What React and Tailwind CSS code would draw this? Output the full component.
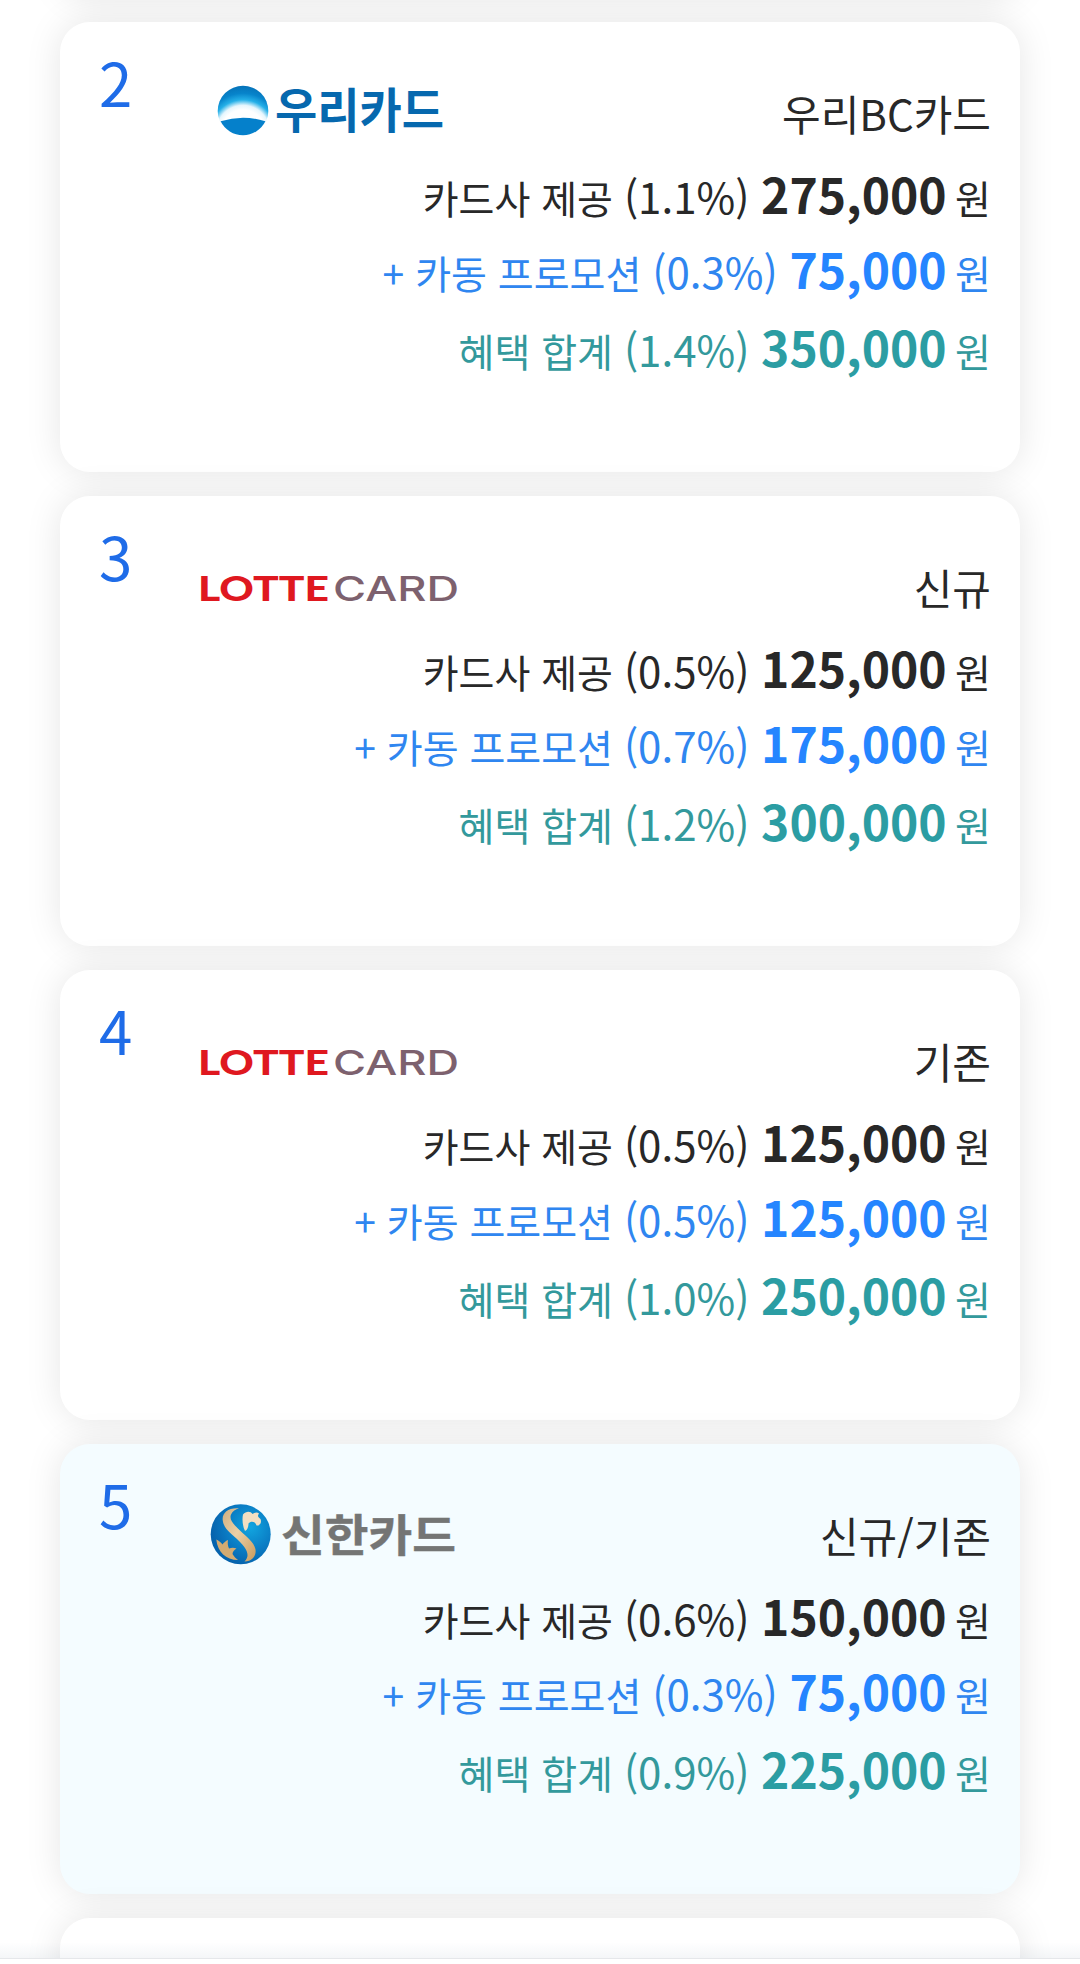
function WooriLogo() {
  return (
    <svg width="300" height="110" viewBox="0 0 300 110" role="img" aria-label="우리카드">
      <defs>
        <radialGradient id="wooriSky" gradientUnits="userSpaceOnUse" cx="63" cy="74" r="46">
          <stop offset="0.48" stopColor="#ffffff" />
          <stop offset="0.58" stopColor="#e6f6fd" />
          <stop offset="0.7" stopColor="#25b0e8" />
          <stop offset="0.84" stopColor="#0784cb" />
          <stop offset="1" stopColor="#0673b9" />
        </radialGradient>
      </defs>
      <circle cx="63" cy="53" r="25.3" fill="url(#wooriSky)" />
      <path d="M40.6 63.3 Q63 56 85.4 63.3 A25 25 0 0 1 40.6 63.3 Z" fill="#0580cb" />
      <text x="95" y="69.8" textLength="169" lengthAdjust="spacingAndGlyphs" fontSize="47.5" fontWeight="700" fill="#0668ae">우리카드</text>
    </svg>
  );
}

function LotteLogo() {
  return (
    <svg width="300" height="110" viewBox="0 0 300 110" role="img" aria-label="LOTTE CARD">
      <text x="18" y="69.3" textLength="131" lengthAdjust="spacingAndGlyphs" fontSize="34" fontWeight="900" fill="#df181f" className="font-['Lato',sans-serif]">LOTTE</text>
      <text x="153" y="69.3" textLength="126" lengthAdjust="spacingAndGlyphs" fontSize="33.5" fontWeight="500" fill="#7d616e" className="font-['Inter',sans-serif]">CARD</text>
    </svg>
  );
}

function ShinhanLogo() {
  return (
    <svg width="300" height="110" viewBox="0 0 300 110" role="img" aria-label="신한카드">
      <defs>
        <radialGradient id="shinhanBall" cx="0.66" cy="0.38" r="0.65">
          <stop offset="0" stopColor="#12a6e0" />
          <stop offset="0.6" stopColor="#0a7cc4" />
          <stop offset="1" stopColor="#0663ad" />
        </radialGradient>
        <linearGradient id="shinhanGold" x1="0" y1="0" x2="1" y2="1">
          <stop offset="0" stopColor="#cfae80" />
          <stop offset="0.45" stopColor="#ecd0a6" />
          <stop offset="1" stopColor="#c89a5c" />
        </linearGradient>
      </defs>
      <circle cx="60.7" cy="54.3" r="30" fill="url(#shinhanBall)" />
      <path d="M59 28.3 C48 27.5 42 33 42.7 40 C43.5 49 52 54 59 61 C66 68 71 75 64.5 81.5 C72 81.5 76.5 76 75.5 69.5 C74 62 67 57 60 50.5 C53 44 49 39.5 51 34.5 C52.5 31 55.5 29.5 59 28.3 Z" fill="url(#shinhanGold)" />
      <path d="M63 34.5 C66 31 70.5 31 72.5 34 C75 32 77.5 32 79 33.5 C77.5 35.5 77.5 37 80.5 39 C82 42.5 80 46 76.5 45.5 C75.5 41.5 71 40.5 68.5 43.5 C68.5 47 67.5 50 65 51 C62.5 46 62 39 63 34.5 Z" fill="#f2dfc2" />
      <path d="M36.3 59.5 C39 60.5 41 62.5 42.5 64.5 C44 62.5 45.5 61 48 60 C47.5 63 47.8 66 49 68.5 C51.5 67.5 54 67.5 56.5 68.5 C54 70 52.8 71.5 52.5 74 C54 76.5 56 78.5 58 80 C46 80 37.5 72 36.3 59.5 Z" fill="#d4ab72" />
      <text x="101" y="71.8" textLength="175" lengthAdjust="spacingAndGlyphs" fontSize="44.5" fontWeight="700" fill="#747574" stroke="#747574" strokeWidth="0.4">신한카드</text>
    </svg>
  );
}

const cards = [
  { rank: "2", Logo: WooriLogo, title: "우리BC카드", base: ["1.1%", "275,000"], promo: ["0.3%", "75,000"], total: ["1.4%", "350,000"] },
  { rank: "3", Logo: LotteLogo, title: "신규", base: ["0.5%", "125,000"], promo: ["0.7%", "175,000"], total: ["1.2%", "300,000"] },
  { rank: "4", Logo: LotteLogo, title: "기존", base: ["0.5%", "125,000"], promo: ["0.5%", "125,000"], total: ["1.0%", "250,000"] },
  { rank: "5", Logo: ShinhanLogo, title: "신규/기존", base: ["0.6%", "150,000"], promo: ["0.3%", "75,000"], total: ["0.9%", "225,000"], tinted: true },
];

function Row({ label, value, className, amountClass = "" }) {
  return (
    <div className={`flex items-baseline justify-end whitespace-pre text-[39px] ${className}`}>
      <span>{`${label} `}</span>
      <span className="text-[42px]">{`(${value[0]}) `}</span>
      <strong className={`text-[48px] font-bold ${amountClass}`}>{value[1]}</strong>
      <span className="-ml-[2.5px]"> 원</span>
    </div>
  );
}

const shell = "w-[960px] shrink-0 rounded-[30px] shadow-[0_0_36px_rgba(0,0,0,0.1)]";

function BenefitCard({ rank, Logo, title, base, promo, total, tinted }) {
  return (
    <section className={`${shell} h-[450px] ${tinted ? "bg-[#f4fcff]" : "bg-white"}`}>
      <header className="flex h-[146px] items-start pr-[29px]">
        <span className="w-[120px] pt-[13px] pl-[39px] text-[60px] leading-[92px] text-[#1f6ce8]">{rank}</span>
        <div className="mt-9">
          <Logo />
        </div>
        <h2 className="ml-auto pt-[61px] text-[42px] leading-[60px] text-[#282828]">{title}</h2>
      </header>
      <div className="pr-[29px]">
        <Row label="카드사 제공" value={base} className="h-[75px] leading-[50px] text-[#282828]" />
        <Row label="+ 카동 프로모션" value={promo} className="h-[78px] leading-[50px] text-[#2f86f0]" amountClass="text-[#2585ff]" />
        <Row label="혜택 합계" value={total} className="h-[75px] leading-[50px] text-[#33999c]" amountClass="text-[#2b9da3]" />
      </div>
    </section>
  );
}

export default function App() {
  return (
    <main className="flex h-[1964px] w-[1080px] flex-col overflow-hidden bg-white font-['Noto_Sans_CJK_KR',sans-serif]" lang="ko">
      <div className="flex h-[1958px] shrink-0 flex-col items-center gap-6 overflow-hidden">
        <section className={`${shell} -mt-[452px] h-[450px] bg-white`} />
        {cards.map((card) => (
          <BenefitCard key={card.rank} {...card} />
        ))}
        <section className={`${shell} h-[450px] bg-white`}>
          <span className="block pt-[13px] pl-[39px] text-[60px] leading-[92px] text-[#1f6ce8]">6</span>
        </section>
      </div>
      <footer className="relative h-[6px] shrink-0 border-t border-[#e5e7ea] bg-white">
        <div className="absolute -top-[17px] left-0 h-4 w-full bg-linear-to-t from-[#4a6a8a]/6 to-transparent" />
      </footer>
    </main>
  );
}
